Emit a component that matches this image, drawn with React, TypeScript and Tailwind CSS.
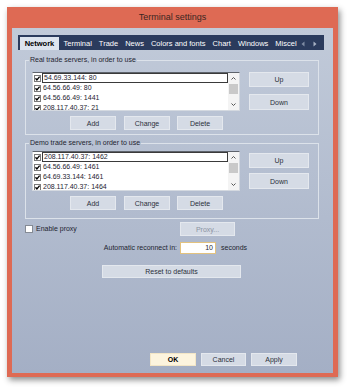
import type { ReactNode } from "react";

const real = ["54.69.33.144: 80", "64.56.66.49: 80", "64.56.66.49: 1441", "208.117.40.37: 21"];
const demo = ["208.117.40.37: 1462", "64.56.66.49: 1461", "64.69.33.144: 1461", "208.117.40.37: 1464"];
const tabs = ["Terminal", "Trade", "News", "Colors and fonts", "Chart", "Windows", "Miscel"];

function Btn({ children, className = "" }: { children: ReactNode; className?: string }) {
  return (
    <button
      className={`flex items-center justify-center border border-[#e4e8ee] bg-[#d5dbe5] text-[7px] leading-none text-[#2b303a] ${className}`}
    >
      {children}
    </button>
  );
}

function Check() {
  return (
    <svg width="7" height="7" viewBox="0 0 7 7" className="shrink-0">
      <rect x="0.5" y="0.5" width="6" height="6" fill="#fff" stroke="#7a7a7a" />
      <path d="M1.5 3.3 L2.9 4.9 L5.6 1.6" fill="none" stroke="#000" strokeWidth="1.3" />
    </svg>
  );
}

function Scrollbar() {
  return (
    <div className="flex w-[11px] shrink-0 flex-col items-center bg-[#f4f4f4]">
      <svg width="7" height="9" viewBox="0 0 7 9" className="mt-[1px]">
        <path d="M1.5 5.5 L3.5 3.5 L5.5 5.5" fill="none" stroke="#555" strokeWidth="1" />
      </svg>
      <div className="mt-[1px] h-[10px] w-[9px] bg-[#c9c9c9]" />
      <div className="flex-1" />
      <svg width="7" height="9" viewBox="0 0 7 9" className="mb-[1px]">
        <path d="M1.5 3.5 L3.5 5.5 L5.5 3.5" fill="none" stroke="#555" strokeWidth="1" />
      </svg>
    </div>
  );
}

function ServerList({ items, h }: { items: string[]; h: string }) {
  return (
    <div className={`flex w-[208px] overflow-hidden border border-[#d4d9e0] border-t-[#5e636b] bg-white ${h}`}>
      <div className="flex min-w-0 flex-1 flex-col pl-[1px]">
        {items.map((s, i) => (
          <div key={s} className="flex h-[10px] shrink-0 items-center">
            <Check />
            <span
              className={
                i === 0
                  ? "ml-[1px] h-[10px] flex-1 border border-[#3a3a3a] pl-[1px] leading-[8px]"
                  : "ml-[2px] leading-[10px]"
              }
            >
              {s}
            </span>
          </div>
        ))}
      </div>
      <Scrollbar />
    </div>
  );
}

export default function App() {
  return (
    <div className="h-[391px] w-[350px] overflow-hidden bg-white pl-[7px] pt-[7px] font-['Liberation_Sans',Arial,sans-serif] text-[#1e2430]">
      <div className="flex h-[370px] w-[331px] flex-col border-x-[5px] border-b-[4px] border-[#de6a54] bg-[#de6a54] shadow-[2px_3px_6px_rgba(0,0,0,0.45)]">
        <div className="flex h-[21px] shrink-0 items-center justify-center text-[9px] text-[#3a2622]">
          Terminal settings
        </div>
        <div className="flex flex-1 flex-col bg-linear-to-b from-[#c1cad9] to-[#a4afc5] text-[7px]">
          {/* tab strip */}
          <div className="ml-[6px] mt-[7px] flex h-[15px] w-[306px] shrink-0 bg-[#2b3b5d] pl-[2px] pt-[2px]">
            <div className="flex h-[13px] w-[39px] items-center justify-center bg-[#dde4ee] text-[7.5px] font-bold text-black">
              Network
            </div>
            <div className="ml-[1px] flex h-[13px] w-[240px] whitespace-nowrap">
              {tabs.map((t) => (
                <span key={t} className="flex items-center px-[3.5px] text-[7.5px] text-white">
                  {t}
                </span>
              ))}
            </div>
            <div className="flex h-[13px] items-center gap-[8px] pl-[1px]">
              <svg width="4" height="6" viewBox="0 0 4 6">
                <path d="M3.5 0.5 L0.5 3 L3.5 5.5 Z" fill="#7f8ba3" />
              </svg>
              <svg width="4" height="6" viewBox="0 0 4 6">
                <path d="M0.5 0.5 L3.5 3 L0.5 5.5 Z" fill="#a8b2c4" />
              </svg>
            </div>
          </div>

          {/* real servers */}
          <fieldset className="ml-[13px] mt-[5px] w-[294px] shrink-0 border border-[#dce2ea] pb-[4px]">
            <legend className="ml-[3px] px-[1px] leading-[10px]">Real trade servers, in order to use</legend>
            <div className="mt-[7px] flex pl-[6px]">
              <ServerList items={real} h="h-[39px]" />
              <div className="ml-[9px] flex flex-col">
                <Btn className="h-[15px] w-[60px]">Up</Btn>
                <Btn className="mt-[7px] h-[16px] w-[60px]">Down</Btn>
              </div>
            </div>
            <div className="mt-[5px] flex pl-[44px]">
              <Btn className="h-[14px] w-[46px]">Add</Btn>
              <Btn className="ml-[8px] h-[14px] w-[46px]">Change</Btn>
              <Btn className="ml-[7px] h-[14px] w-[46px]">Delete</Btn>
            </div>
          </fieldset>

          {/* demo servers */}
          <fieldset className="ml-[13px] mt-[3px] w-[294px] shrink-0 border border-[#dce2ea] pb-[8px]">
            <legend className="ml-[3px] px-[1px] leading-[10px]">Demo trade servers, in order to use</legend>
            <div className="mt-[3px] flex pl-[6px]">
              <ServerList items={demo} h="h-[40px]" />
              <div className="ml-[9px] mt-[2px] flex flex-col">
                <Btn className="h-[15px] w-[60px]">Up</Btn>
                <Btn className="mt-[5px] h-[16px] w-[60px]">Down</Btn>
              </div>
            </div>
            <div className="mt-[5px] flex pl-[44px]">
              <Btn className="h-[14px] w-[46px]">Add</Btn>
              <Btn className="ml-[8px] h-[14px] w-[46px]">Change</Btn>
              <Btn className="ml-[7px] h-[14px] w-[46px]">Delete</Btn>
            </div>
          </fieldset>

          {/* proxy */}
          <div className="mt-[3px] flex h-[14px] shrink-0 items-center">
            <div className="flex w-[168px] items-center pl-[13px]">
              <div className="h-[8px] w-[8px] border border-[#858b95] bg-white" />
              <span className="ml-[3px]">Enable proxy</span>
            </div>
            <Btn className="h-[14px] w-[55px] bg-[#d0d6e1] text-[#8b93a2]">Proxy...</Btn>
          </div>

          <div className="mt-[6px] flex h-[12px] shrink-0 items-center">
            <span className="w-[165px] text-right">Automatic reconnect in:</span>
            <div className="ml-[3px] flex h-[12px] w-[36px] items-center justify-end border border-[#e3c27e] bg-white pr-[2px]">
              10
            </div>
            <span className="ml-[5px]">seconds</span>
          </div>

          <div className="mt-[11px] flex shrink-0 pl-[90px]">
            <Btn className="h-[13px] w-[139px]">Reset to defaults</Btn>
          </div>

          <div className="flex-1" />
          <div className="mb-[7px] flex shrink-0 pl-[138px]">
            <Btn className="h-[13px] w-[46px] border-[#f3e6c6] bg-[#fcf4de] font-bold text-black">OK</Btn>
            <Btn className="ml-[5px] h-[13px] w-[45px]">Cancel</Btn>
            <Btn className="ml-[5px] h-[13px] w-[46px]">Apply</Btn>
          </div>
        </div>
      </div>
    </div>
  );
}
